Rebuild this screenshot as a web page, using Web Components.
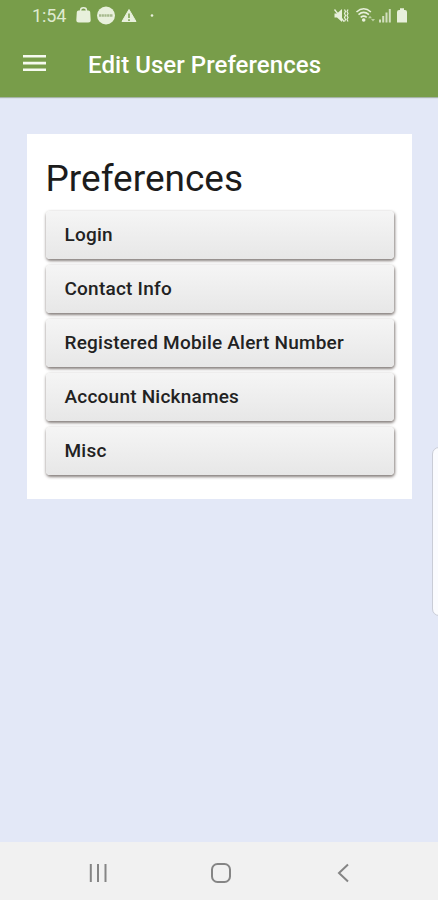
<!DOCTYPE html>
<html lang="en">
<head>
<meta charset="UTF-8">
<meta name="viewport" content="width=device-width, initial-scale=1.0">
<title>Edit User Preferences</title>
<style>
    html, body {
        margin: 0;
        height: 100%;
    }

    body {
        font-family: Roboto, "Liberation Sans", sans-serif;
        background: #e3e8f7;
        overflow: hidden;
    }
</style>
</head>
<body>
<phone-screen>
    <status-bar slot="top" time="1:54"></status-bar>
    <app-header slot="top">Edit User Preferences</app-header>
    <preference-card>
        <span slot="heading">Preferences</span>
        <preference-button>Login</preference-button>
        <preference-button>Contact Info</preference-button>
        <preference-button>Registered Mobile Alert Number</preference-button>
        <preference-button>Account Nicknames</preference-button>
        <preference-button>Misc</preference-button>
    </preference-card>
    <edge-handle slot="overlay"></edge-handle>
    <navigation-bar slot="bottom"></navigation-bar>
</phone-screen>

<script>
class PhoneScreen extends HTMLElement {
    connectedCallback() {
        this.attachShadow({ mode: 'open' }).innerHTML = `
            <style>
                :host {
                    display: flex;
                    flex-direction: column;
                    position: relative;
                    height: 900px;
                    background: #e3e8f7;
                }

                .top {
                    background: #789d4a;
                    height: 97px;
                    flex: none;
                    box-shadow: 0 1px 1px rgba(90, 120, 70, 0.45);
                }

                main {
                    flex: 1;
                    padding: 37px 26px 0 26.5px;
                }
            </style>
            <div class="top"><slot name="top"></slot></div>
            <main><slot></slot></main>
            <slot name="bottom"></slot>
            <slot name="overlay"></slot>
        `;
    }
}

class StatusBar extends HTMLElement {
    connectedCallback() {
        this.attachShadow({ mode: 'open' }).innerHTML = `
            <style>
                :host {
                    display: flex;
                    justify-content: space-between;
                    height: 32px;
                    padding: 0 30px 0 32px;
                    color: #dfead0;
                    font-size: 18px;
                    line-height: 32px;
                }

                .left, .right {
                    display: flex;
                }

                .time {
                    width: 43px;
                    letter-spacing: -0.1px;
                }

                svg {
                    display: block;
                    fill: #e8f0dc;
                }
            </style>
            <div class="left">
                <span class="time">${this.getAttribute('time')}</span>
                <svg width="82" height="32" viewBox="75 0 82 32">
                    <path d="M78.500 10.500h10q1.500 0 1.700 1.500l.5 8q0 2.500-2.500 2.500h-9.400q-2.500 0-2.500-2.500l.5-8q.2-1.500 1.700-1.500z"/>
                    <path d="M80.500 11.500v-1a3 2.700 0 0 1 6 0v1" fill="none" stroke="#e8f0dc" stroke-width="1.500"/>
                    <circle cx="106" cy="15.500" r="9"/>
                    <path d="M99 15.500h14" stroke="#a5b98c" stroke-width="2.400" stroke-dasharray="2.200 .5"/>
                    <path d="M129 9.500l7 12h-14z" stroke="#e8f0dc" stroke-width="1" stroke-linejoin="round"/>
                    <path d="M129 13.500v4.500M129 19.200v1.700" stroke="#789d4a" stroke-width="1.500"/>
                    <circle cx="152" cy="15.500" r="1.300"/>
                </svg>
            </div>
            <div class="right">
                <svg width="76" height="32" viewBox="332 0 76 32">
                    <path d="M334.500 13.500h2.500l5-4.500v13l-5-4.500h-2.500z"/>
                    <g fill="none" stroke="#e8f0dc">
                        <path d="M334.500 9.500l9.500 12" stroke-width="1.300"/>
                        <path d="M344.500 9.500l1 2-1 2 1 2-1 2 1 2-1 2M348 9.500l-1 2 1 2-1 2 1 2-1 2 1 2" stroke-width="1.200"/>
                        <path d="M356.500 12q7.200-6.500 14.400 0M358.500 14.700q5.200-4.500 10.400 0M360.700 17.300q3-2.500 6 0" stroke-width="1.600"/>
                    </g>
                    <circle cx="363.700" cy="20" r="1.800"/>
                    <path d="M370 15.800l2 2.500h-4zM373 21.500l-2-2.500h4z" opacity=".6"/>
                    <path d="M379 19.500h2v3h-2zM382.200 16h2v6.500h-2zM385.500 12.500h2v10h-2zM388.800 9h2v13.500h-2z" opacity=".8"/>
                    <path d="M400 8.300h4v1.700h1q2 0 2 2v10.500h-10v-10.500q0-2 2-2h1z"/>
                </svg>
            </div>
        `;
    }
}

class AppHeader extends HTMLElement {
    connectedCallback() {
        this.attachShadow({ mode: 'open' }).innerHTML = `
            <style>
                :host {
                    display: flex;
                    align-items: center;
                    height: 65px;
                    padding-left: 23px;
                    color: #fff;
                }

                svg {
                    flex: none;
                    margin-right: 42px;
                    margin-top: -3px;
                }

                h1 {
                    margin: 0;
                    font-size: 24px;
                    font-weight: 500;
                    letter-spacing: 0.05px;
                    white-space: nowrap;
                }
            </style>
            <svg width="23" height="18" viewBox="0 0 23 18" fill="#f6faef">
                <path d="M0 1h23v2.600H0zM0 7.800h23v2.600H0zM0 14.400h23v2.600H0z"/>
            </svg>
            <h1><slot></slot></h1>
        `;
    }
}

class PreferenceCard extends HTMLElement {
    connectedCallback() {
        this.attachShadow({ mode: 'open' }).innerHTML = `
            <style>
                :host {
                    display: block;
                    box-sizing: border-box;
                    height: 364.500px;
                    padding: 22px 18px 0 19px;
                    background: #fff;
                }

                h2 {
                    margin: 0 0 11px;
                    font-size: 37px;
                    font-weight: 400;
                    line-height: 45px;
                    height: 44px;
                    color: #1c1c1c;
                }

                .list {
                    display: grid;
                    gap: 6px;
                }
            </style>
            <h2><slot name="heading"></slot></h2>
            <div class="list"><slot></slot></div>
        `;
    }
}

class PreferenceButton extends HTMLElement {
    connectedCallback() {
        this.attachShadow({ mode: 'open' }).innerHTML = `
            <style>
                :host {
                    display: block;
                    height: 48px;
                }

                button {
                    display: block;
                    box-sizing: border-box;
                    width: 100%;
                    height: 48px;
                    padding: 0 19px;
                    border: 0;
                    border-radius: 4px;
                    background: linear-gradient(#f5f5f5, #e7e7e7);
                    box-shadow: 0.500px 1.500px 3px 0.500px rgba(70, 60, 55, 0.65);
                    color: #222;
                    font: 500 19px/48px Roboto, "Liberation Sans", sans-serif;
                    letter-spacing: 0.22px;
                    text-align: left;
                    white-space: nowrap;
                }
            </style>
            <button type="button"><slot></slot></button>
        `;
    }
}

class EdgeHandle extends HTMLElement {
    connectedCallback() {
        // floats over the page, half off the right edge
        this.attachShadow({ mode: 'open' }).innerHTML = `
            <style>
                :host {
                    display: block;
                    position: absolute;
                    top: 447px;
                    right: -8px;
                    box-sizing: border-box;
                    width: 14.500px;
                    height: 169px;
                    border: 1.500px solid #c9ccd6;
                    border-radius: 8px;
                    background: #fafbfe;
                }
            </style>
        `;
    }
}

class NavigationBar extends HTMLElement {
    connectedCallback() {
        this.attachShadow({ mode: 'open' }).innerHTML = `
            <style>
                :host {
                    display: flex;
                    flex: none;
                    align-items: center;
                    justify-content: space-between;
                    box-sizing: border-box;
                    height: 58px;
                    padding: 3px 84px 0 88px;
                    background: #f1f1f1;
                }

                svg {
                    fill: none;
                    stroke: #858585;
                    stroke-width: 2;
                }
            </style>
            <svg width="20" height="20" viewBox="0 0 20 20"><path d="M2.800 1v18M10 1v18M17.500 1v18"/></svg>
            <svg width="22" height="22" viewBox="0 0 22 22"><rect x="2" y="2" width="18" height="18" rx="5.500"/></svg>
            <svg width="20" height="20" viewBox="0 0 20 20"><path d="M14 1.500L5 10l9 8.500"/></svg>
        `;
    }
}

customElements.define('phone-screen', PhoneScreen);
customElements.define('status-bar', StatusBar);
customElements.define('app-header', AppHeader);
customElements.define('preference-card', PreferenceCard);
customElements.define('preference-button', PreferenceButton);
customElements.define('edge-handle', EdgeHandle);
customElements.define('navigation-bar', NavigationBar);
</script>
</body>
</html>
